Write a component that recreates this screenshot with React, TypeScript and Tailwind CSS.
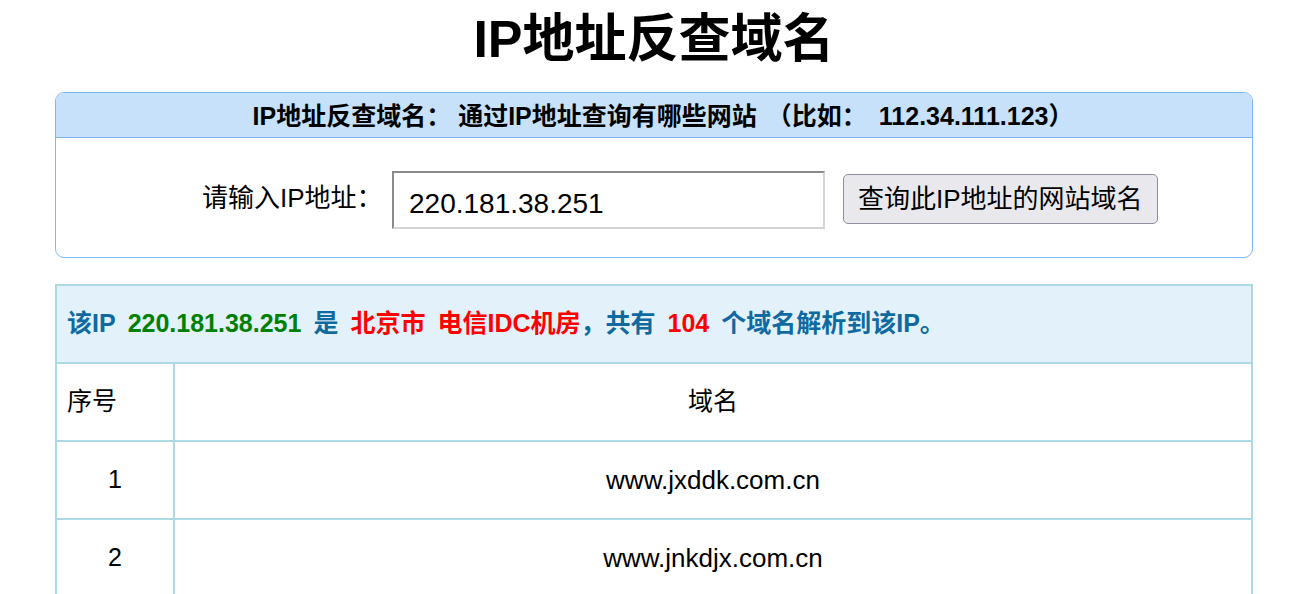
import React from "react";

const FONT = '"Liberation Sans", Arial, "Noto Sans CJK SC", sans-serif';

function Sp() {
  return <span className="inline-block w-[12px]" />;
}

export default function App() {
  const rows = [
    { n: 1, d: "www.jxddk.com.cn" },
    { n: 2, d: "www.jnkdjx.com.cn" },
  ];
  return (
    <div className="bg-white min-h-screen text-black" style={{ fontFamily: FONT }}>
      <div className="ml-[55px] w-[1198px]">
        <h1 className="h-[92px] pt-[4px] text-center text-[52px] leading-[70px] font-bold">IP地址反查域名</h1>

        <div className="rounded-[9px] border border-[#7db8f2] overflow-hidden">
          <div className="h-[45px] pt-[3px] pl-[18px] bg-[#c7e1fb] border-b border-[#7db8f2] flex items-center justify-center text-[25px] font-bold">
            IP地址反查域名：<span className="inline-block w-[7px]" />通过IP地址查询有哪些网站<span className="inline-block w-[10px]" />（比如：<span className="inline-block w-[12px]" />112.34.111.123）
          </div>
          <div className="h-[119px] flex items-center pl-[146px]">
            <span className="text-[26px] w-[190px] pt-[2px]">请输入IP地址：</span>
            <input
              className="w-[433px] h-[58px] mt-[4px] border-2 border-t-[#8a8a8a] border-l-[#8a8a8a] border-b-[#d4d4d4] border-r-[#d4d4d4] pl-[15px] pt-[8px] text-[28px] outline-none"
              defaultValue="220.181.38.251"
              style={{ fontFamily: FONT }}
            />
            <button
              className="ml-[18px] h-[50px] px-[14px] mt-[3px] rounded-[5px] border border-[#8f8f9d] bg-[#e9e9ed] text-[26px]"
              style={{ fontFamily: FONT }}
            >
              查询此IP地址的网站域名
            </button>
          </div>
        </div>

        <table className="mt-[26px] w-full border-collapse border-2 border-[#add8e6]">
          <tbody>
            <tr className="h-[78px] bg-[#e3f1fa]">
              <td colSpan={2} className="border-2 border-[#add8e6] pl-[10px] text-[25px] font-bold text-[#0e6aa0]">
                该IP<Sp /><span className="text-[#008000]">220.181.38.251</span><Sp />是<Sp />
                <span className="text-[#ff0000]">北京市<Sp />电信IDC机房</span>，共有<Sp />
                <span className="text-[#ff0000]">104</span><Sp />个域名解析到该IP。
              </td>
            </tr>
            <tr className="h-[78px]">
              <td className="w-[118px] border-2 border-[#add8e6] pl-[10px] text-[25px]">序号</td>
              <td className="border-2 border-[#add8e6] text-center text-[25px]">域名</td>
            </tr>
            {rows.map((r) => (
              <tr key={r.n} className="h-[78px]">
                <td className="border-2 border-[#add8e6] text-center text-[25px]">{r.n}</td>
                <td className="border-2 border-[#add8e6] text-center text-[26px]">{r.d}</td>
              </tr>
            ))}
          </tbody>
        </table>
      </div>
    </div>
  );
}
